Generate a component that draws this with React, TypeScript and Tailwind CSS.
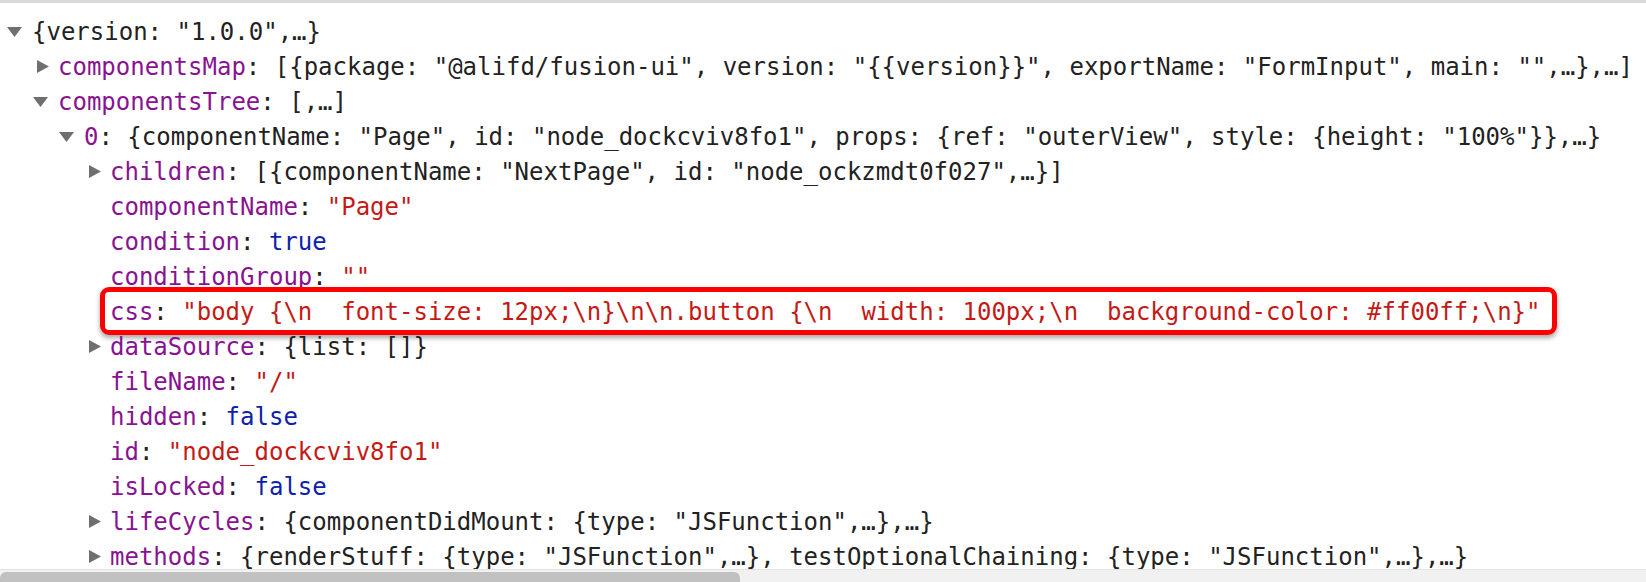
import React from 'react';

type Toggle = 'open' | 'closed' | null;

const indent: Record<number, string> = {
  0: 'pl-[7px]',
  1: 'pl-[33px]',
  2: 'pl-[59px]',
  3: 'pl-[85px]',
};

const Key = ({ children }: { children: React.ReactNode }) => <span className="text-[#881391]">{children}</span>;
const Str = ({ children }: { children: React.ReactNode }) => <span className="text-[#c41a16]">{children}</span>;
const Kw = ({ children }: { children: React.ReactNode }) => <span className="text-[#0d22aa]">{children}</span>;

const Arrow = ({ toggle }: { toggle: Toggle }) => {
  if (toggle === 'open') {
    return (
      <svg width="15" height="10" viewBox="0 0 15 10" className="shrink-0">
        <path d="M0 0 L15 0 L7.5 10 Z" fill="#6f6f6f" />
      </svg>
    );
  }
  if (toggle === 'closed') {
    return (
      <svg width="12" height="13" viewBox="0 0 12 13" className="ml-[4px] shrink-0">
        <path d="M0 0 L12 6.5 L0 13 Z" fill="#6f6f6f" />
      </svg>
    );
  }
  return null;
};

const Row = ({ level, toggle = null, children, highlight = false }: { level: number; toggle?: Toggle; children: React.ReactNode; highlight?: boolean }) => (
  <div className={`relative flex h-[35px] items-center ${indent[level]}`}>
    <div className="flex w-[25px] shrink-0 items-center">
      <Arrow toggle={toggle} />
    </div>
    <div className="whitespace-pre leading-[24px]">{children}</div>
    {highlight && (
      <div className="absolute left-[100px] top-[-7px] h-[48px] w-[1457px] rounded-[9px] border-[5px] border-[#fe0000] shadow-[0_3px_5px_rgba(0,0,0,0.35)]"></div>
    )}
  </div>
);

export default function App() {
  return (
    <div className="flex h-[582px] w-[1646px] flex-col overflow-hidden bg-white font-['DejaVu_Sans_Mono',monospace] text-[24px] text-[#222222]">
      <div className="h-[3px] shrink-0 bg-[#d9d9d9]"></div>
      <div className="flex-1 overflow-hidden pt-[11px]">
        <Row level={0} toggle="open">{'{version: "1.0.0",…}'}</Row>
        <Row level={1} toggle="closed">
          <Key>componentsMap</Key>
          {': [{package: "@alifd/fusion-ui", version: "{{version}}", exportName: "FormInput", main: "",…},…]'}
        </Row>
        <Row level={1} toggle="open">
          <Key>componentsTree</Key>
          {': [,…]'}
        </Row>
        <Row level={2} toggle="open">
          <Key>0</Key>
          {': {componentName: "Page", id: "node_dockcviv8fo1", props: {ref: "outerView", style: {height: "100%"}},…}'}
        </Row>
        <Row level={3} toggle="closed">
          <Key>children</Key>
          {': [{componentName: "NextPage", id: "node_ockzmdt0f027",…}]'}
        </Row>
        <Row level={3}>
          <Key>componentName</Key>
          {': '}
          <Str>"Page"</Str>
        </Row>
        <Row level={3}>
          <Key>condition</Key>
          {': '}
          <Kw>true</Kw>
        </Row>
        <Row level={3}>
          <Key>conditionGroup</Key>
          {': '}
          <Str>""</Str>
        </Row>
        <Row level={3} highlight>
          <Key>css</Key>
          {': '}
          <Str>{'"body {\\n  font-size: 12px;\\n}\\n\\n.button {\\n  width: 100px;\\n  background-color: #ff00ff;\\n}"'}</Str>
        </Row>
        <Row level={3} toggle="closed">
          <Key>dataSource</Key>
          {': {list: []}'}
        </Row>
        <Row level={3}>
          <Key>fileName</Key>
          {': '}
          <Str>"/"</Str>
        </Row>
        <Row level={3}>
          <Key>hidden</Key>
          {': '}
          <Kw>false</Kw>
        </Row>
        <Row level={3}>
          <Key>id</Key>
          {': '}
          <Str>"node_dockcviv8fo1"</Str>
        </Row>
        <Row level={3}>
          <Key>isLocked</Key>
          {': '}
          <Kw>false</Kw>
        </Row>
        <Row level={3} toggle="closed">
          <Key>lifeCycles</Key>
          {': {componentDidMount: {type: "JSFunction",…},…}'}
        </Row>
        <Row level={3} toggle="closed">
          <Key>methods</Key>
          {': {renderStuff: {type: "JSFunction",…}, testOptionalChaining: {type: "JSFunction",…},…}'}
        </Row>
      </div>
      {/* horizontal scrollbar */}
      <div className="h-[13px] shrink-0 border-t border-[#e3e3e3] bg-[#f1f1f1] pt-[2px]">
        <div className="h-[10px] w-[740px] rounded-tl-[6px] rounded-tr-[6px] bg-[#c1c1c1]"></div>
      </div>
    </div>
  );
}
